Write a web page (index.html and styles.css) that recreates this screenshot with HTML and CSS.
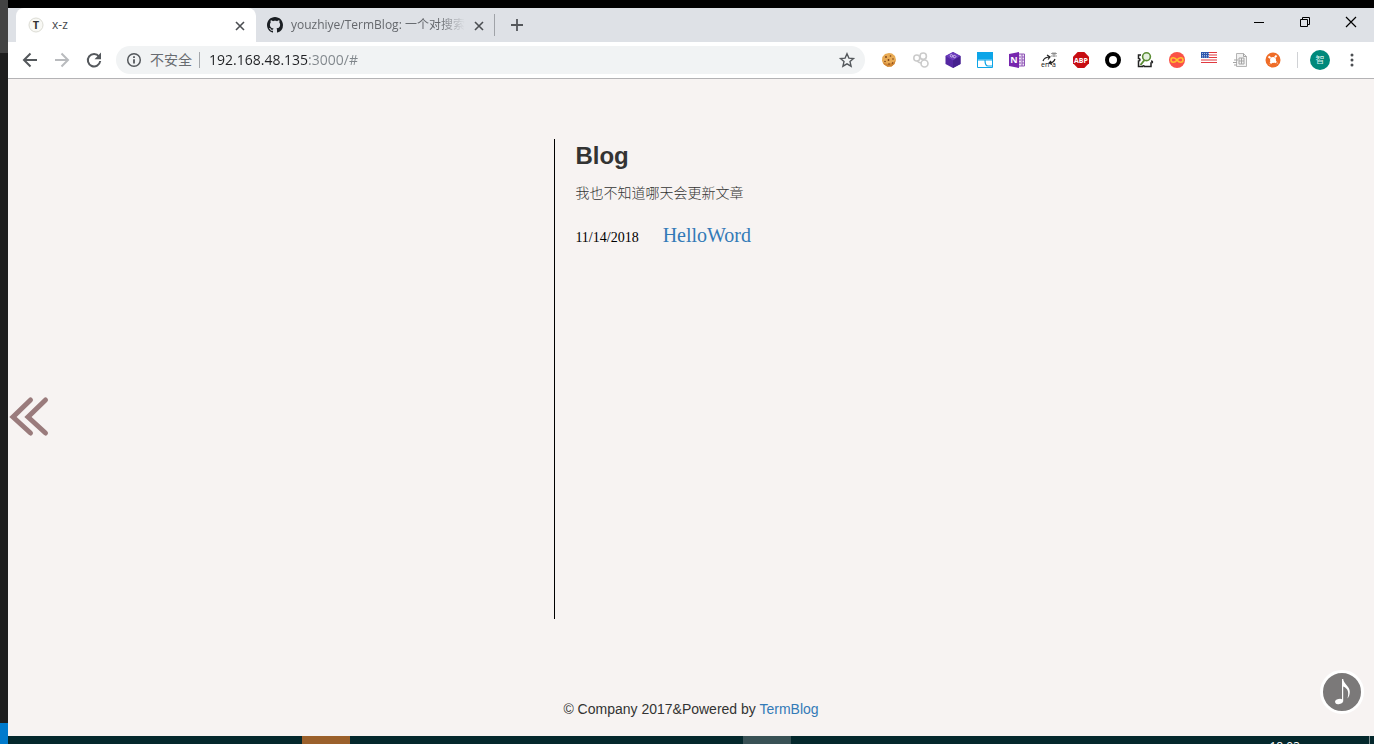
FILE: index.html
```html
<!DOCTYPE html>
<html lang="zh-CN">
<head>
<meta charset="utf-8">
<title>x-z</title>
<link rel="stylesheet" href="styles.css">
</head>
<body>
<div class="desktop">
  <aside class="editor-edge"><span class="edge-top"></span><span class="edge-body"></span><span class="edge-status"></span></aside>
  <div class="window">
    <header class="tabstrip">
      <div class="tab tab-active">
        <svg class="icon16" viewBox="0 0 16 16"><circle cx="8" cy="8" r="7" fill="#f8f8f4" stroke="#dcdcd4"/><text x="8" y="12" class="glyph-t">T</text></svg>
        <span class="tab-title">x-z</span>
        <button class="tab-close" aria-label="关闭"><svg viewBox="0 0 10 10"><path d="M1 1l8 8M9 1L1 9" stroke="#4b4e52" stroke-width="1.600"/></svg></button>
      </div>
      <div class="tab tab-idle">
        <svg class="icon16" viewBox="0 0 16 16"><path fill="#1b1f23" fill-rule="evenodd" d="M8 0C3.580 0 0 3.580 0 8c0 3.540 2.290 6.530 5.470 7.590.4.070.55-.17.55-.38 0-.19-.01-.82-.01-1.490-2.010.37-2.530-.49-2.690-.94-.09-.23-.48-.94-.82-1.130-.28-.15-.68-.52-.01-.53.63-.01 1.080.58 1.230.82.72 1.210 1.870.87 2.330.66.070-.52.28-.87.51-1.070-1.780-.2-3.640-.89-3.640-3.950 0-.87.31-1.590.82-2.150-.08-.2-.36-1.020.08-2.120 0 0 .67-.21 2.200.82.64-.18 1.320-.27 2-.27s1.360.09 2 .27c1.530-1.040 2.200-.82 2.200-.82.44 1.100.16 1.920.08 2.120.51.56.82 1.270.82 2.150 0 3.070-1.870 3.750-3.650 3.950.29.25.54.73.54 1.480 0 1.070-.01 1.930-.01 2.200 0 .21.15.46.55.38A8.010 8.010 0 0 0 16 8c0-4.420-3.580-8-8-8z"/></svg>
        <span class="tab-title">youzhiye/TermBlog: 一个对搜索</span>
        <button class="tab-close" aria-label="关闭"><svg viewBox="0 0 10 10"><path d="M1 1l8 8M9 1L1 9" stroke="#4b4e52" stroke-width="1.600"/></svg></button>
      </div>
      <button class="new-tab" aria-label="新标签页"><svg viewBox="0 0 12 12"><path d="M6 0v12M0 6h12" stroke="#54575b" stroke-width="1.800"/></svg></button>
      <div class="window-controls">
        <button aria-label="最小化"><svg viewBox="0 0 12 12"><path d="M1 6.500h10" stroke="#000"/></svg></button>
        <button aria-label="还原"><svg viewBox="0 0 12 12" fill="none" stroke="#000"><path d="M1.500 3.500h7v7h-7zM3.500 3.500v-2h7v7h-2"/></svg></button>
        <button aria-label="关闭窗口"><svg viewBox="0 0 12 12"><path d="M1 1l10 10M11 1L1 11" stroke="#000" stroke-width="1.200"/></svg></button>
      </div>
    </header>
    <nav class="toolbar">
      <button class="tool" aria-label="后退"><svg viewBox="0 0 16 16" fill="none" stroke="#54585c" stroke-width="2"><path d="M15 8H2M8.500 1.500L2 8l6.500 6.500"/></svg></button>
      <button class="tool" aria-label="前进"><svg viewBox="0 0 16 16" fill="none" stroke="#b9bbbe" stroke-width="2"><path d="M1 8h13M7.500 1.500L14 8l-6.500 6.500"/></svg></button>
      <button class="tool" aria-label="重新加载"><svg viewBox="0 0 16 16"><path d="M13 4.500A6.200 6.200 0 1 0 14.200 9" fill="none" stroke="#54585c" stroke-width="2"/><path d="M15 .5v6.700H8.500z" fill="#54585c"/></svg></button>
      <div class="omnibox">
        <svg class="info" viewBox="0 0 16 16"><circle cx="8" cy="8" r="6.300" fill="none" stroke="#54585c" stroke-width="1.500"/><path d="M7.100 7.200h1.800v4.300H7.100zM7.100 4.300h1.800v1.800H7.100z" fill="#54585c"/></svg>
        <label class="security" for="address">不安全</label>
        <input id="address" class="address" type="text" value="192.168.48.135:3000/#">
        <button class="star" aria-label="收藏"><svg viewBox="0 0 16 16"><path d="M8 1.800l1.900 4.300 4.600.4-3.500 3.100 1.100 4.600L8 11.800l-4.100 2.400L5 9.600 1.500 6.500l4.600-.4z" fill="none" stroke="#54585c" stroke-width="1.400"/></svg></button>
      </div>
      <div class="extensions">
        <button aria-label="Cookie"><svg viewBox="0 0 16 16"><path d="M8 1l3 .5 3 2.500 1 4-1.500 4-3 2.500-4 .3L3 12.500 1 9l.3-4L4 2z" fill="#e8ab55"/><path d="M1.500 10c3 2.500 9 2.500 13-1.500l-1 3.500-3 2.500-4 .3L3 12.500z" fill="#cf8433"/><g fill="#7a3f18"><circle cx="5" cy="5" r=".9"/><circle cx="9.500" cy="4" r=".8"/><circle cx="12" cy="7" r=".8"/><circle cx="7.500" cy="8" r=".9"/><circle cx="4" cy="9.500" r=".8"/><circle cx="8" cy="12" r=".8"/><circle cx="11.500" cy="11" r=".7"/></g></svg></button>
        <button aria-label="链接"><svg viewBox="0 0 16 16" fill="none" stroke="#cbcbcb" stroke-width="1.600"><circle cx="3.800" cy="6" r="3"/><circle cx="10.200" cy="4.200" r="3.200"/><circle cx="11.500" cy="11.500" r="3.500"/><path d="M4 9c2 2 3 2 5 2"/></svg></button>
        <button aria-label="立方体"><svg viewBox="0 0 16 16"><path d="M8 0l7.500 4v8L8 16 .5 12V4z" fill="#5427a2"/><path d="M8 0l7.500 4L8 8.500.5 4z" fill="#6c3cbc"/><path d="M8 8.500V16l7.500-4V4z" fill="#45208e"/><path d="M5 3.500c1-1.600 2.700-1 3 .8.300 1.800 2.300 2 3 .4-.6-1.800-2.200-1.500-3-.4-.8 1.200-2.600 1-3-.8z" fill="none" stroke="#d9cbf0" stroke-width=".9"/></svg></button>
        <button aria-label="面板"><svg viewBox="0 0 16 16"><path d="M.5.500h15v15H.5z" fill="#fff" stroke="#0ca5e8"/><path d="M0 0h16v7.500H0z" fill="#0ca5e8"/><path d="M1 8h7c0 4 1 6 3 6h4M8 8h7" fill="none" stroke="#0ca5e8" stroke-width="1.200"/></svg></button>
        <button aria-label="OneNote"><svg viewBox="0 0 16 16"><path d="M8 2h7.500v12H8z" fill="#eee3f6" stroke="#8e55b5"/><path d="M13 2v12M13 5h3M13 8h3M13 11h3M9 5h3M9 8h3M9 11h3" stroke="#8e55b5"/><path d="M0 2l10-2v16L0 14z" fill="#7726ae"/><text x="5" y="11" class="glyph-n">N</text></svg></button>
        <button aria-label="翻译"><svg viewBox="0 0 16 16"><path d="M2 9c1-3 4-4 7-4M6 3L9 5 7 7.500M14 7c-1 3-3 4-6 4M10 9l-2 2 3 1.500" fill="none" stroke="#222" stroke-width="1.200"/><path d="M10 1.500h6M12 0v3M14 0v3M10 4h6M13 1.500V5" stroke="#777" stroke-width=".7"/><text x="0" y="15" class="glyph-en">en</text><text x="11" y="15" class="glyph-en">a</text></svg></button>
        <button aria-label="Adblock Plus"><svg viewBox="0 0 16 16"><path d="M4.700 0h6.600L16 4.700v6.600L11.300 16H4.700L0 11.300V4.700z" fill="#c70d12"/><text x="8" y="10.500" class="glyph-abp">ABP</text></svg></button>
        <button aria-label="圆环"><svg viewBox="0 0 16 16"><circle cx="8" cy="8" r="6" fill="#fff" stroke="#000" stroke-width="4"/></svg></button>
        <button aria-label="搜索扩展"><svg viewBox="0 0 16 16"><path d="M4 3H1.500v3.500c2 0 2 2.500 0 2.500v5.500h4c0-1 2-1 2 0H14V11c2 0 2-2 0-2" fill="none" stroke="#222" stroke-width="1.500"/><circle cx="9.500" cy="4.700" r="3.900" fill="#e6f0e0" stroke="#5b8d35" stroke-width="1.600"/><path d="M7.500 8l-4 5" stroke="#5b8d35" stroke-width="2"/></svg></button>
        <button aria-label="无限"><svg viewBox="0 0 16 16"><circle cx="8" cy="8" r="8" fill="#fa5148"/><path d="M8 8C6 5 2 5 2 8s4 3 6 0 6-3 6 0-4 3-6 0z" fill="none" stroke="#ffc12e" stroke-width="1.600"/></svg></button>
        <button aria-label="美国"><svg viewBox="0 0 16 16"><path d="M0 0h16v11H0z" fill="#fff"/><path d="M0 .5h16M0 3h16M0 5.500h16M0 8h16M0 10.500h16" stroke="#e0393f" stroke-width="1.200"/><path d="M0 0h8v6H0z" fill="#2f57ad"/><path d="M1 1.500h7M1 3.500h7M1 5h7" stroke="#dbe4f5" stroke-width=".7" stroke-dasharray="1 1"/></svg></button>
        <button aria-label="文档"><svg viewBox="0 0 16 16"><path d="M3.500 1.500h7l3 3v10h-10z" fill="#f2f2f2" stroke="#b5b5b5"/><path d="M10.500 1.500v3h3M6 6h5v6H6zM8.500 6v6M6 9h5M1 8h4M0 10.500h4M1 13h3" fill="none" stroke="#a5a5a5"/></svg></button>
        <button aria-label="橙色工具"><svg viewBox="0 0 16 16"><circle cx="8" cy="8" r="7.500" fill="#ef6c27"/><path d="M3.500 4.500l9 7M11.500 3.500l-7 9" stroke="#fff" stroke-width="2" stroke-dasharray="2.500 1.200"/><circle cx="8" cy="8" r="3" fill="#fff"/></svg></button>
      </div>
      <button class="avatar">智</button>
      <button class="menu" aria-label="菜单"><svg viewBox="0 0 16 16" fill="#4c4f53"><circle cx="8" cy="3" r="1.500"/><circle cx="8" cy="8" r="1.500"/><circle cx="8" cy="13" r="1.500"/></svg></button>
    </nav>
    <main class="page">
      <section class="blog">
        <h1>Blog</h1>
        <p class="intro">我也不知道哪天会更新文章</p>
        <div class="post"><time datetime="2018-11-14">11/14/2018</time><a href="#">HelloWord</a></div>
      </section>
      <footer>© Company 2017&amp;Powered by <a href="#">TermBlog</a></footer>
      <button class="drawer" aria-label="展开"><svg viewBox="0 0 40 40" fill="none" stroke="#9a7b7c" stroke-width="5" stroke-linecap="round"><path d="M22.500 4L5 21l17.500 16M37.500 4L20 21l17.500 16"/></svg></button>
      <button class="music" aria-label="音乐"><svg viewBox="0 0 38 38" fill="#fff"><ellipse cx="16" cy="28.500" rx="4" ry="2.600" transform="rotate(-12 16 28.500)"/><path d="M19 6h1.200c.3 5 6.800 7.500 6.600 13-.1 2.600-1 5-2.300 6.500 1.600-6 .7-10-4.300-12v15H19z"/></svg></button>
    </main>
  </div>
  <div class="taskbar"><span class="task task-orange"></span><span class="task task-gray"></span><time class="clock">18:03</time><span class="peek"></span></div>
</div>
</body>
</html>
```
FILE: styles.css
```css
* { box-sizing: border-box; }
body { margin: 0; background: #000; font-family: "Liberation Sans", "Noto Sans CJK SC", sans-serif; }
button { margin: 0; padding: 0; border: 0; background: none; display: grid; place-items: center; flex: none; }
svg { display: block; flex: none; overflow: visible; }
a { color: #337ab7; text-decoration: none; }
.desktop { min-height: 100vh; display: grid; grid-template: 8px 1fr 8px / 8px minmax(0, 1fr); }
.editor-edge { grid-row: 1 / 4; display: flex; flex-direction: column; }
.edge-top { height: 53px; background: #434343; }
.edge-body { flex: 1; background: #1e1e1e; }
.edge-status { height: 21px; background: #007acc; }
.window { grid-area: 2 / 2; display: flex; flex-direction: column; }
.tabstrip { height: 34px; display: flex; background: #dee1e6; padding-left: 8px; font: 12px/34px "Open Sans", "Noto Sans CJK SC", sans-serif; color: #45484c; }
.tab { width: 240px; display: flex; align-items: center; gap: 8px; padding: 0 10px 0 12px; }
.tab-active { background: #fff; border-radius: 8px 8px 0 0; }
.tab-idle { width: 239px; color: #65686d; padding: 0 9px 0 11px; border-right: 1px solid #a0a3a8; border-image: linear-gradient(transparent 7px, #a0a3a8 7px, #a0a3a8 27px, transparent 27px) 1; }
.icon16 { width: 16px; height: 16px; }
.tab-title { flex: 1; min-width: 0; overflow: hidden; white-space: nowrap; }
.tab-idle .tab-title { mask-image: linear-gradient(to right, #000 85%, transparent); }
.tab-close { width: 12px; height: 16px; margin-top: 1px; }
.tab-close svg { width: 10px; height: 10px; }
.new-tab { width: 44px; }
.new-tab svg { width: 12px; height: 12px; }
.window-controls { margin-left: auto; display: flex; height: 28px; }
.window-controls button { width: 46px; }
.window-controls svg { width: 12px; height: 12px; }
.toolbar { height: 37px; display: flex; align-items: center; padding: 0 12px 0 6px; background: #fff; border-bottom: 1px solid #b4b3b5; }
.tool { width: 32px; height: 28px; }
.tool svg { width: 16px; height: 16px; }
.omnibox { flex: 1; min-width: 0; height: 28px; margin-left: 6px; padding: 0 10px; border-radius: 14px; background: #f1f3f4; display: flex; align-items: center; font: 14px/20px "Open Sans", "Noto Sans CJK SC", sans-serif; }
.info { width: 16px; height: 16px; }
.security { margin-left: 8px; padding-right: 7px; border-right: 1px solid #a5a8ac; line-height: 16px; color: #686b70; flex: none; }
.address { flex: 1; min-width: 0; margin: 0 8px 0 9px; padding: 0; border: 0; outline: 0; font: inherit; color: transparent; background: linear-gradient(to right, #202124 100px, #80868b 100px) text; }
.star svg { width: 16px; height: 16px; }
.extensions { display: flex; gap: 16px; margin-left: 16px; padding-right: 16px; border-right: 1px solid #d0d2d5; }
.extensions svg { width: 16px; height: 16px; }
.glyph-t { font: bold 11px "Open Sans", sans-serif; fill: #333; text-anchor: middle; }
.glyph-n { font: bold 9px "Open Sans", sans-serif; fill: #fff; text-anchor: middle; }
.glyph-en { font: 7px "Open Sans", sans-serif; fill: #111; }
.glyph-abp { font: bold 7px "Open Sans", sans-serif; fill: #fff; text-anchor: middle; }
.avatar { width: 20px; height: 20px; margin-left: 12px; border-radius: 50%; background: #00897b; color: #d5f0ec; font: 9px/20px "Noto Sans CJK SC", sans-serif; }
.menu { width: 20px; margin-left: 12px; }
.menu svg { width: 16px; height: 16px; }
.page { position: relative; flex: 1; display: flex; flex-direction: column; padding: 60px 0 17px; background: #f7f3f2; color: #333; font-size: 14px; line-height: 20px; }
.blog { flex: 1; margin: 0 0 80px 40%; padding-left: 20px; border-left: 1px solid #000; }
h1 { margin: 4px 0 12px; font-size: 24px; line-height: 26px; }
.intro { margin: 0 0 18px; line-height: 24px; font-weight: 300; }
.post { display: flex; align-items: baseline; gap: 24px; font-family: "Liberation Serif", serif; color: #000; line-height: 24px; }
.post a { font-size: 20px; }
footer { text-align: center; }
.drawer { position: absolute; left: 0; top: 317px; }
.drawer svg { width: 40px; height: 40px; }
.music { position: absolute; right: 10px; bottom: 22px; width: 44px; height: 44px; border: 3px solid #fff; border-radius: 50%; background: #7b7979; }
.music svg { width: 38px; height: 38px; }
.taskbar { grid-area: 3 / 2; display: flex; background: #04282c; overflow: hidden; }
.task { width: 48px; }
.task-orange { margin-left: 294px; background: #9b602b; }
.task-gray { margin-left: 393px; background: #395155; }
.clock { margin-left: auto; margin-right: 69px; padding-top: 3px; color: #fff; font: 12px/16px "Open Sans", sans-serif; }
.peek { width: 5px; border-left: 1px solid #7e9092; }
```
